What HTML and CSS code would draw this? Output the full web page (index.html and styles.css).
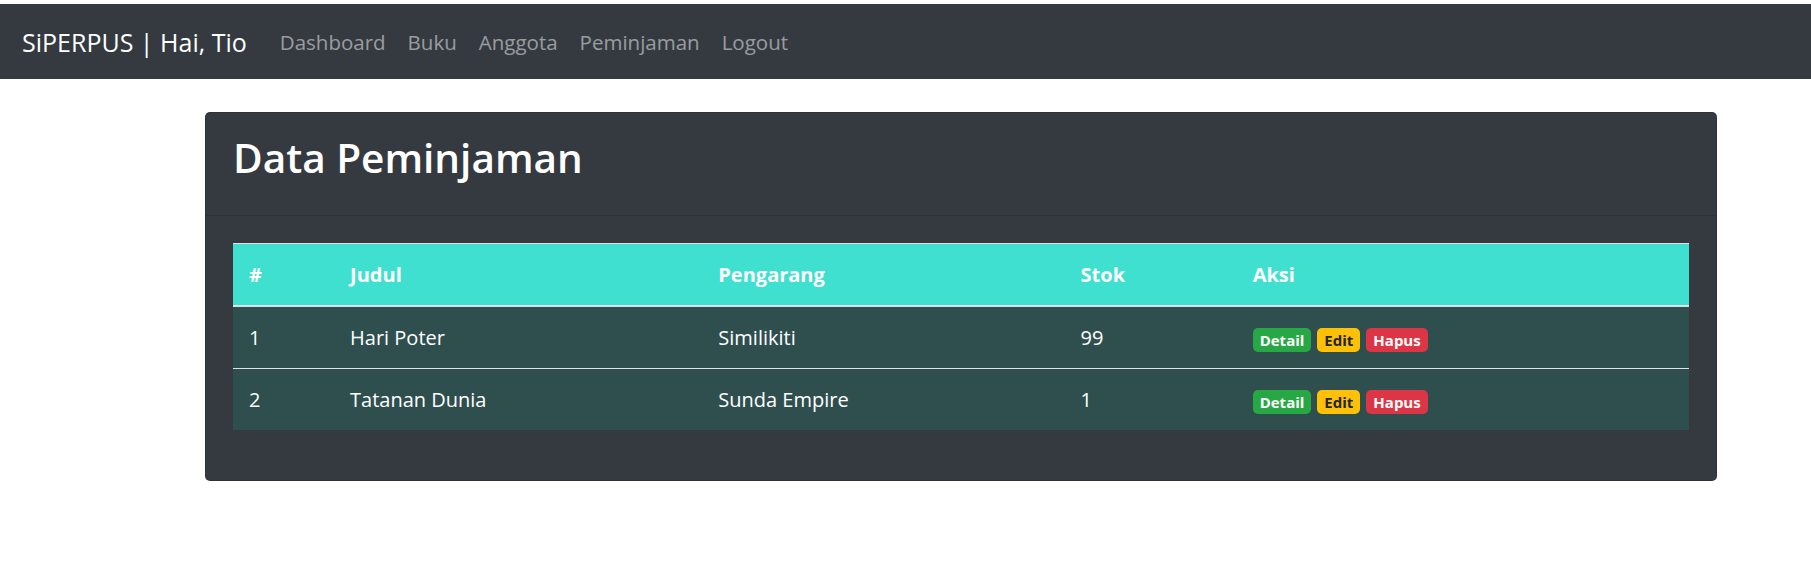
FILE: index.html
```html
<!DOCTYPE html>
<html lang="id">
<head>
<meta charset="utf-8">
<title>SiPERPUS | Data Peminjaman</title>
<link rel="stylesheet" href="styles.css">
</head>
<body>
<nav class="navbar">
  <a class="brand" href="#">SiPERPUS | Hai, Tio</a>
  <ul class="nav">
    <li><a class="nav-link" href="#">Dashboard</a></li>
    <li><a class="nav-link" href="#">Buku</a></li>
    <li><a class="nav-link" href="#">Anggota</a></li>
    <li><a class="nav-link" href="#">Peminjaman</a></li>
    <li><a class="nav-link" href="#">Logout</a></li>
  </ul>
</nav>
<main class="main">
  <section class="card">
    <header class="card-header">
      <h2 class="card-title">Data Peminjaman</h2>
    </header>
    <div class="card-body">
      <table class="table">
        <colgroup>
          <col class="c-no">
          <col class="c-judul">
          <col class="c-pengarang">
          <col class="c-stok">
          <col class="c-aksi">
        </colgroup>
        <thead>
          <tr><th>#</th><th>Judul</th><th>Pengarang</th><th>Stok</th><th>Aksi</th></tr>
        </thead>
        <tbody>
          <tr>
            <td>1</td><td>Hari Poter</td><td>Similikiti</td><td>99</td>
            <td><div class="actions"><a class="badge badge-success" href="#">Detail</a><a class="badge badge-warning" href="#">Edit</a><a class="badge badge-danger" href="#">Hapus</a></div></td>
          </tr>
          <tr>
            <td>2</td><td>Tatanan Dunia</td><td>Sunda Empire</td><td>1</td>
            <td><div class="actions"><a class="badge badge-success" href="#">Detail</a><a class="badge badge-warning" href="#">Edit</a><a class="badge badge-danger" href="#">Hapus</a></div></td>
          </tr>
        </tbody>
      </table>
    </div>
  </section>
</main>
</body>
</html>
```
FILE: styles.css
```css
* { box-sizing: border-box; }

html, body {
  margin: 0;
  padding: 0;
  background: #ffffff;
}

body {
  padding-top: 4px;
  font-family: "Open Sans", "Noto Sans", sans-serif;
  font-size: 20px;
  color: #212529;
}

a { text-decoration: none; }

.navbar {
  display: flex;
  align-items: center;
  height: 75px;
  padding: 0 22px;
  background: #343a40;
}

.brand {
  font-size: 25px;
  color: #ffffff;
  margin-right: 22px;
  white-space: nowrap;
}

.nav {
  display: flex;
  list-style: none;
  margin: 0;
  padding: 0;
}

.nav-link {
  display: block;
  padding: 0 11px;
  font-size: 20.5px;
  color: rgba(255, 255, 255, 0.5);
}

.main {
  padding: 33px 94px 0 205px;
}

.card {
  background: #343a40;
  border: 1px solid rgba(0, 0, 0, 0.125);
  border-radius: 5px;
}

.card-header {
  height: 103px;
  padding: 19px 27px 0;
  border-bottom: 1px solid rgba(0, 0, 0, 0.125);
}

.card-title {
  margin: 0;
  font-size: 40.5px;
  line-height: 52px;
  font-weight: 600;
  color: #ffffff;
}

.card-body {
  padding: 27px 27px 50px;
}

.table {
  width: 100%;
  border-collapse: collapse;
  color: #ffffff;
}

.c-no { width: 101px; }
.c-judul { width: 368px; }
.c-pengarang { width: 362px; }
.c-stok { width: 172px; }
.c-aksi { width: 452px; }

.table th {
  text-align: left;
  font-weight: 700;
  background: #40e0d0;
  padding: 15px 16px 14px;
  line-height: 32px;
  border-top: 1px solid #dee2e6;
  border-bottom: 2px solid #dee2e6;
}

.table td {
  background: #2f4f4f;
  padding: 15px 16px;
  line-height: 31px;
  border-top: 1px solid #dee2e6;
  vertical-align: top;
}

.actions {
  display: flex;
  gap: 6px;
  padding-top: 6px;
}

.badge {
  display: inline-block;
  height: 24px;
  line-height: 24px;
  padding: 0 7px;
  font-size: 15px;
  font-weight: 700;
  border-radius: 5px;
  white-space: nowrap;
}

.badge-success { background: #28a745; color: #ffffff; }
.badge-warning { background: #ffc107; color: #212529; }
.badge-danger { background: #dc3545; color: #ffffff; }
```
